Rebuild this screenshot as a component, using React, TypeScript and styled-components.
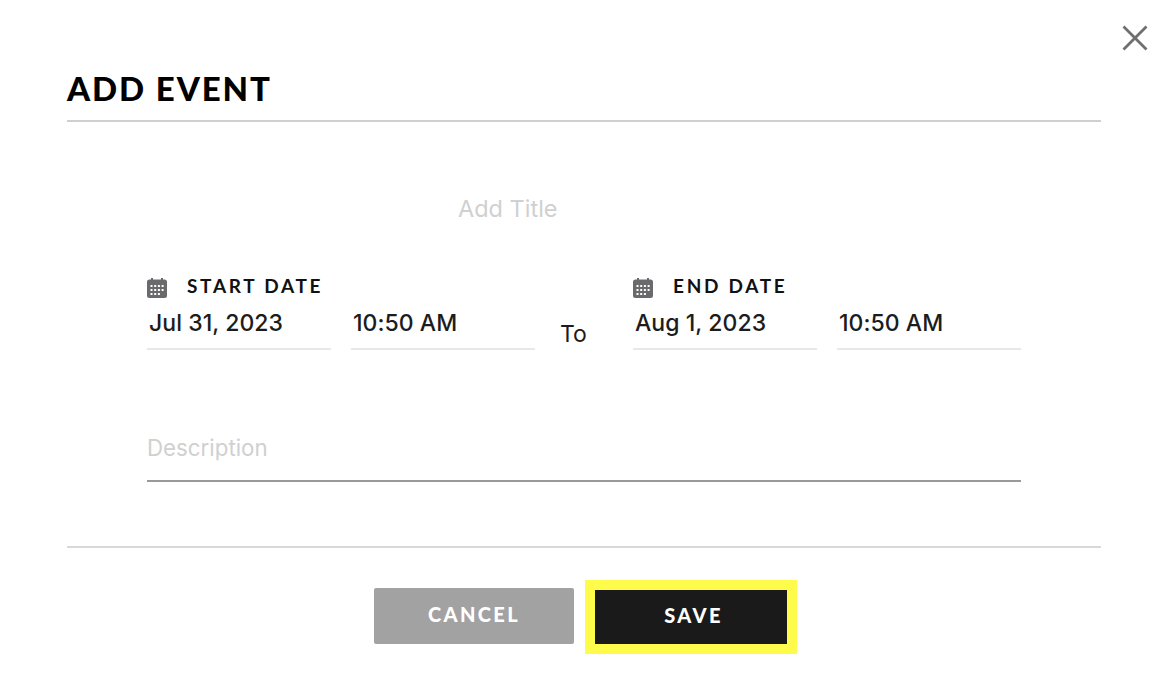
import React from "react";
import styled, { createGlobalStyle } from "styled-components";

const GlobalStyle = createGlobalStyle`
  html, body {
    margin: 0;
    padding: 0;
    background: #ffffff;
  }
`;

const CalendarIcon = () => (
  <svg width="20" height="20" viewBox="0 0 20 20">
    <path
      fill="#6a6a6c"
      fillRule="evenodd"
      d="M2.500 1.500H4V0h2v1.500h8V0h2v1.500h1.500A2.500 2.500 0 0 1 20 4v13.500a2.500 2.500 0 0 1-2.500 2.500h-15A2.500 2.500 0 0 1 0 17.500V4a2.500 2.500 0 0 1 2.500-2.500zM3.500 7v2h2V7zm3.700 0v2h2V7zm3.700 0v2h2V7zm3.700 0v2h2V7zM3.500 11v2h2v-2zm3.700 0v2h2v-2zm3.700 0v2h2v-2zm3.700 0v2h2v-2zM3.500 15v2h2v-2zm3.700 0v2h2v-2zm3.700 0v2h2v-2z"
    />
  </svg>
);

const DateBlock = ({ label, date, time }: { label: string; date: string; time: string }) => (
  <DateGroup>
    <DateLabel>
      <CalendarIcon />
      <span>{label}</span>
    </DateLabel>
    <FieldRow>
      <Field>{date}</Field>
      <Field>{time}</Field>
    </FieldRow>
  </DateGroup>
);

export default function App() {
  return (
    <Modal>
      <GlobalStyle />
      <CloseButton aria-label="close">
        <svg width="26" height="26" viewBox="0 0 26 26">
          <path d="M1.500 1.500l23 23M24.500 1.500l-23 23" stroke="#6f6f71" strokeWidth="2.800" fill="none" />
        </svg>
      </CloseButton>
      <Header>
        <Title>ADD EVENT</Title>
      </Header>
      <Body>
        <TitleInput>Add Title</TitleInput>
        <DatesRow>
          <DateBlock label="START DATE" date="Jul 31, 2023" time="10:50 AM" />
          <ToLabel>To</ToLabel>
          <DateBlock label="END DATE" date="Aug 1, 2023" time="10:50 AM" />
        </DatesRow>
        <Description>Description</Description>
      </Body>
      <Footer>
        <CancelButton>CANCEL</CancelButton>
        <SaveOutline>
          <SaveButton>SAVE</SaveButton>
        </SaveOutline>
      </Footer>
    </Modal>
  );
}

const Modal = styled.div`
  position: relative;
  box-sizing: border-box;
  width: 1168px;
  height: 700px;
  padding: 0 67px;
  overflow: hidden;
  font-family: Inter, "Liberation Sans", sans-serif;
  color: #1a1a1a;
`;

const CloseButton = styled.button`
  position: absolute;
  top: 25px;
  right: 20px;
  width: 26px;
  height: 26px;
  padding: 0;
  border: none;
  background: none;
  line-height: 0;
`;

const Header = styled.div`
  box-sizing: border-box;
  height: 122px;
  padding-top: 69px;
  border-bottom: 2px solid #d0d0d0;
`;

const Title = styled.h1`
  margin: 0;
  font-family: Lato, sans-serif;
  font-size: 33px;
  line-height: 38px;
  font-weight: 900;
  letter-spacing: 1.900px;
  color: #000000;
`;

const Body = styled.div`
  box-sizing: border-box;
  padding: 72px 80px 64px;
  border-bottom: 2px solid #d8d8d8;
`;

const TitleInput = styled.div`
  padding-left: 311px;
  font-size: 23.500px;
  line-height: 30px;
  color: #d0d0d0;
`;

const DatesRow = styled.div`
  display: flex;
  margin-top: 50px;
`;

const DateGroup = styled.div`
  width: 388px;
`;

const DateLabel = styled.div`
  display: flex;
  align-items: center;
  gap: 20px;
  height: 24px;
  font-family: Lato, sans-serif;
  font-size: 19px;
  font-weight: 700;
  letter-spacing: 2.700px;
  color: #111111;

  svg {
    flex: none;
    margin-top: 4px;
  }

  span {
    margin-top: -2px;
  }
`;

const FieldRow = styled.div`
  display: flex;
  gap: 20px;
  margin-top: 12px;
`;

const Field = styled.div`
  box-sizing: border-box;
  width: 184px;
  height: 40px;
  padding-left: 2px;
  border-bottom: 2px solid #e8e8e8;
  font-size: 23px;
  line-height: 26px;
  font-weight: 500;
  letter-spacing: 0.050px;
  color: #1c1c1c;
`;

const ToLabel = styled.div`
  box-sizing: border-box;
  width: 98px;
  padding: 46px 0 0 25px;
  font-size: 23px;
  line-height: 28px;
  color: #1c1c1c;
`;

const Description = styled.div`
  box-sizing: border-box;
  height: 49px;
  margin-top: 83px;
  border-bottom: 2px solid #999999;
  font-size: 22.300px;
  line-height: 30px;
  color: #d0d0d0;
`;

const Footer = styled.div`
  display: flex;
  justify-content: center;
  align-items: center;
  gap: 11px;
  padding: 32px 0 0 3px;
`;

const BaseButton = styled.button`
  padding: 0 0 5px;
  border: none;
  font-family: Lato, sans-serif;
  font-size: 20px;
  font-weight: 900;
  letter-spacing: 2.400px;
  color: #ffffff;
`;

const CancelButton = styled(BaseButton)`
  width: 200px;
  height: 56px;
  margin-bottom: 2px;
  border-radius: 2px;
  background: #a2a2a3;
`;

const SaveOutline = styled.div`
  padding: 10px;
  background: #fffb4b;
  line-height: 0;
`;

const SaveButton = styled(BaseButton)`
  width: 192px;
  height: 54px;
  padding-left: 5px;
  background: #1a1a1a;
`;
